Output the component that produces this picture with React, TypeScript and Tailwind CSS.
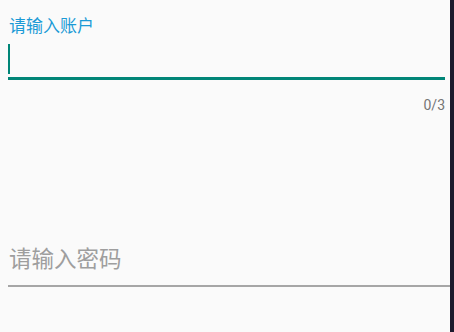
import React from 'react'

const cjk = { fontFamily: 'Roboto, "Noto Sans CJK SC", sans-serif' }

export default function App() {
  return (
    <div className="flex h-[332px] w-full overflow-hidden bg-[#fafafa]" style={cjk}>
      <div className="flex flex-1 flex-col pl-2">
        {/* account field, focused */}
        <div className="mr-[5px]">
          <div className="pt-[16px]">
            <div className="h-[20px] pl-px text-[17px] leading-[20px] text-[#1b9ad6]">请输入账户</div>
          </div>
          <div className="h-[41px] pt-[8px]">
            <div className="h-[30px] w-[2px] bg-[#008577]" />
          </div>
          <div className="h-[3px] bg-[#008577]" />
          <div className="pt-[17px] text-right text-[14px] leading-[16px] text-[#757575]">0/3</div>
        </div>

        {/* password field, idle */}
        <div className="pt-[135px]">
          <div className="h-[22px] pl-px text-[22.5px] leading-[22px] text-[#9e9e9e]">请输入密码</div>
          <div className="mt-[15px] h-[2px] bg-[#a6a6a6]" />
        </div>
      </div>
      <div className="w-[4px] bg-[#1c1b2d]" />
    </div>
  )
}
